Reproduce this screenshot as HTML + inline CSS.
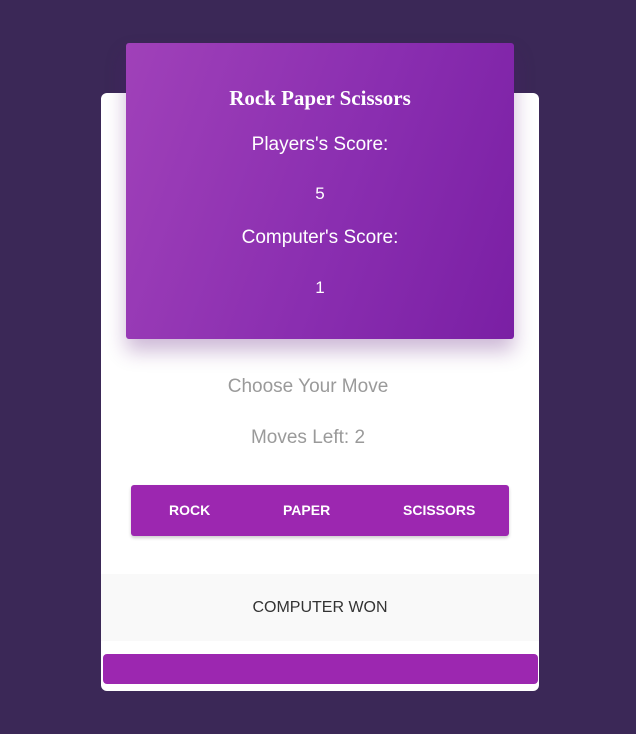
<!DOCTYPE html>
<html><head><style>
html,body{margin:0;padding:0;}
body{width:636px;height:734px;background:#3b2857;font-family:"Liberation Sans",sans-serif;position:relative;overflow:hidden;}
.card{position:absolute;left:101px;top:93px;width:438px;height:598px;background:#fff;border-radius:6px;}
.head{position:absolute;left:126px;top:43px;width:388px;height:296px;border-radius:3px;
background:linear-gradient(110deg,#a041b9 0%,#8a2eb0 55%,#7a1fa4 100%);box-shadow:0 12px 20px rgba(90,20,120,.3);color:#fff;text-align:center;}
.head h1{position:absolute;top:43px;width:100%;margin:0;font-family:"Liberation Serif",serif;font-weight:bold;font-size:21px;line-height:24px;}
.t{position:absolute;width:100%;text-align:center;font-size:19px;line-height:22px;}
.g{color:#9a9a9a;}
.btns{position:absolute;left:131px;top:485px;width:378px;height:51px;background:#9c27b0;border-radius:3px;box-shadow:0 2px 3px rgba(0,0,0,.2);}
.btns span{position:absolute;top:17px;color:#fff;font-weight:bold;font-size:14px;line-height:16px;}
.res{position:absolute;left:101px;top:574px;width:438px;height:67px;background:#f9f9f9;text-align:center;font-size:16px;line-height:67px;color:#333;}
.bar{position:absolute;left:103px;top:654px;width:435px;height:30px;background:#9c27b0;border-radius:4px;}
</style></head><body>
<div class="card"></div>
<div class="head">
<h1>Rock Paper Scissors</h1>
<div class="t" style="top:91px">Players's Score:</div>
<div class="t" style="top:140px;font-size:17px">5</div>
<div class="t" style="top:184px">Computer's Score:</div>
<div class="t" style="top:234px;font-size:17px">1</div>
</div>
<div class="t g" style="left:-10px;top:376px">Choose Your Move</div>
<div class="t g" style="left:-10px;top:427px">Moves Left: 2</div>
<div class="btns">
<span style="left:38px">ROCK</span>
<span style="left:152px">PAPER</span>
<span style="left:272px">SCISSORS</span>
</div>
<div class="res">COMPUTER WON</div>
<div class="bar"></div>
</body></html>
